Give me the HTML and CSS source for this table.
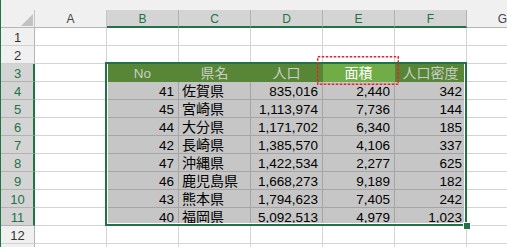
FILE: index.html
```html
<!DOCTYPE html>
<html lang="ja">
<head>
<meta charset="utf-8">
<title>Sheet</title>
<link rel="stylesheet" href="styles.css">
</head>
<body>
<div class="page">
  <div class="strip"></div>
  <div class="sheet">
    <div class="corner"><span class="tri"></span></div>
    <div class="ch">A</div><div class="ch sel">B</div><div class="ch sel">C</div><div class="ch sel">D</div><div class="ch sel">E</div><div class="ch sel">F</div><div class="ch">G</div>

    <div class="rh">1</div><div></div><div></div><div></div><div></div><div></div><div></div><div></div>
    <div class="rh">2</div><div></div><div></div><div></div><div></div><div></div><div></div><div></div>

    <div class="rh sel">3</div><div></div>
    <div class="h">No</div><div class="h cj">県名</div><div class="h cj">人口</div><div class="h act cj">面積</div><div class="h cj">人口密度</div>
    <div></div>

    <div class="rh sel">4</div><div></div><div class="d n">41</div><div class="d t">佐賀県</div><div class="d n">835,016</div><div class="d n">2,440</div><div class="d n">342</div><div></div>
    <div class="rh sel">5</div><div></div><div class="d n">45</div><div class="d t">宮崎県</div><div class="d n">1,113,974</div><div class="d n">7,736</div><div class="d n">144</div><div></div>
    <div class="rh sel">6</div><div></div><div class="d n">44</div><div class="d t">大分県</div><div class="d n">1,171,702</div><div class="d n">6,340</div><div class="d n">185</div><div></div>
    <div class="rh sel">7</div><div></div><div class="d n">42</div><div class="d t">長崎県</div><div class="d n">1,385,570</div><div class="d n">4,106</div><div class="d n">337</div><div></div>
    <div class="rh sel">8</div><div></div><div class="d n">47</div><div class="d t">沖縄県</div><div class="d n">1,422,534</div><div class="d n">2,277</div><div class="d n">625</div><div></div>
    <div class="rh sel">9</div><div></div><div class="d n">46</div><div class="d t">鹿児島県</div><div class="d n">1,668,273</div><div class="d n">9,189</div><div class="d n">182</div><div></div>
    <div class="rh sel">10</div><div></div><div class="d n">43</div><div class="d t">熊本県</div><div class="d n">1,794,623</div><div class="d n">7,405</div><div class="d n">242</div><div></div>
    <div class="rh sel">11</div><div></div><div class="d n">40</div><div class="d t">福岡県</div><div class="d n">5,092,513</div><div class="d n">4,979</div><div class="d n">1,023</div><div></div>

    <div class="rh">12</div><div></div><div></div><div></div><div></div><div></div><div></div><div></div>
    <div class="rh"></div><div></div><div></div><div></div><div></div><div></div><div></div><div></div>
  </div>

  <div class="selbox"></div>
  <div class="handle"></div>
  <svg class="marquee" width="82" height="29" viewBox="0 0 82 29">
    <rect x="0.75" y="0.75" width="80.5" height="27.5" fill="none" stroke="#e8202a" stroke-width="1.5" stroke-dasharray="2.5 1.5"/>
  </svg>
</div>
</body>
</html>
```

FILE: styles.css
```css
* {
  box-sizing: border-box;
  margin: 0;
  padding: 0;
}

html, body {
  width: 507px;
  height: 247px;
  overflow: hidden;
  background: #ffffff;
}

.page {
  position: relative;
  height: 247px;
  border-left: 1px solid #217346;
  overflow: hidden;
  font-family: "Liberation Sans", Arial, sans-serif;
  color: #000;
}

.strip {
  height: 10px;
  background: #f0f0f0;
}

.sheet {
  display: grid;
  grid-template-columns: 34px repeat(7, 72px);
  grid-auto-rows: 18px;
}

.sheet > div {
  border-right: 1px solid #d4d4d4;
  border-bottom: 1px solid #d4d4d4;
  white-space: nowrap;
}

.sheet > .corner {
  background: #f0f0f0;
  border-right-color: #c4c4c4;
  border-bottom-color: #b5b5b5;
  display: flex;
  align-items: flex-end;
  justify-content: flex-end;
  padding: 0 1px 1px 0;
}

.tri {
  width: 0;
  height: 0;
  border-left: 12px solid transparent;
  border-bottom: 12px solid #c2c2c2;
}

.sheet > .ch {
  background: #f0f0f0;
  border-right-color: #c6c6c6;
  border-bottom-color: #b5b5b5;
  text-align: center;
  font-size: 12px;
  line-height: 18px;
  color: #444444;
}

.sheet > .ch.sel {
  background: #d4d4d4;
  color: #217346;
  border-right-color: #b2b2b2;
  border-bottom: 2px solid #217346;
}

.sheet > .rh {
  background: #f0f0f0;
  border-right-color: #b5b5b5;
  border-bottom-color: #d0d0d0;
  text-align: center;
  font-size: 13px;
  line-height: 19px;
  color: #333333;
}

.sheet > .rh.sel {
  background: #d4d4d4;
  color: #217346;
  border-right: 2px solid #217346;
  border-bottom-color: #b2b2b2;
  padding-left: 1px;
}

.sheet > .h {
  background: #578637;
  border-color: #578637;
  color: #c9cfc4;
  text-align: center;
  font-size: 13.5px;
  line-height: 19px;
}

.sheet > .cj {
  font-family: "Noto Sans CJK JP", sans-serif;
  font-size: 14px;
  line-height: 17px;
}

.sheet > .h.act {
  background: #70ad47;
  border-color: #70ad47;
  color: #ffffff;
}

.sheet > .d {
  background: #c6c6c6;
  border-color: #a5a5a5;
}

.sheet > .n {
  text-align: right;
  padding-right: 4px;
  font-size: 13.5px;
  line-height: 19px;
}

.sheet > .t {
  padding-left: 3px;
  font-family: "Noto Sans CJK JP", sans-serif;
  font-size: 14px;
  line-height: 17px;
}

.selbox {
  position: absolute;
  left: 104px;
  top: 62px;
  width: 362px;
  height: 164px;
  border: 2px solid #217346;
  box-shadow: inset 1px 0 0 #ffffff, inset -1px 0 0 #ffffff, inset 0 -1px 0 #ffffff;
  pointer-events: none;
}

.handle {
  position: absolute;
  left: 462px;
  top: 222px;
  width: 8px;
  height: 8px;
  background: #217346;
  border: 1px solid #ffffff;
}

.marquee {
  position: absolute;
  left: 316px;
  top: 56px;
  display: block;
}
```
